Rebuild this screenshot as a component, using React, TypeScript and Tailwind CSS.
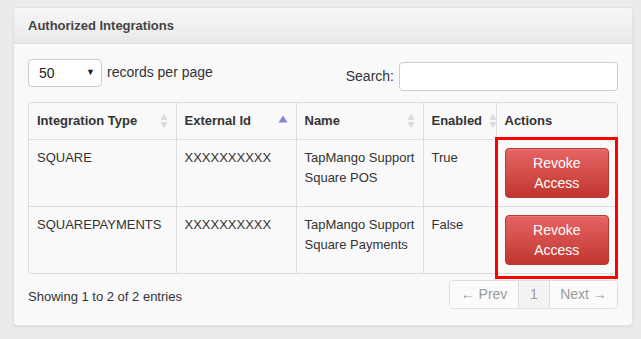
import React from "react";

interface Integration {
    type: string;
    externalId: string;
    name: string;
    enabled: string;
}

const rows: Integration[] = [
    { type: "SQUARE", externalId: "XXXXXXXXXX", name: "TapMango Support Square POS", enabled: "True" },
    { type: "SQUAREPAYMENTS", externalId: "XXXXXXXXXX", name: "TapMango Support Square Payments", enabled: "False" },
];

// icona di ordinamento: entrambe le frecce grigie oppure solo quella su attiva
const SortIcon = ({ active }: { active?: boolean }) => {
    if (active) {
        return (
            <svg width="10" height="8" viewBox="0 0 10 8" className="shrink-0">
                <path d="M5 0.5 L9.5 7.5 L0.5 7.5 Z" fill="#8383db" />
            </svg>
        );
    }
    return (
        <svg width="8" height="16" viewBox="0 0 8 16" className="shrink-0">
            <path d="M4 0.5 L7.5 7 L0.5 7 Z" fill="#dcdcdc" />
            <path d="M4 15.5 L7.5 9 L0.5 9 Z" fill="#dcdcdc" />
        </svg>
    );
};

const columns = [
    { label: "Integration Type", width: "w-[147px]", sort: "both" },
    { label: "External Id", width: "w-[120px]", sort: "up" },
    { label: "Name", width: "w-[127px]", sort: "both" },
    { label: "Enabled", width: "w-[73px]", sort: "both" },
    { label: "Actions", width: "w-[121px]", sort: "none" },
];

export default function App() {
    return (
        <div className="min-h-[339px] w-full bg-[#ebebeb] pl-[13px] pt-[7px] font-['Liberation_Sans',Arial,sans-serif] text-[#333]">
            <div className="w-[620px] h-[319px] rounded-[4px] border border-[#e2e2e2] bg-[#f9f9f9] shadow-[0_1px_2px_rgba(0,0,0,0.08)] overflow-hidden">
                {/* intestazione pannello */}
                <div className="h-[36px] flex items-center px-[14px] border-b border-[#dcdcdc] bg-linear-to-b from-[#f7f7f7] to-[#e9e9e9]">
                    <h3 className="text-[13px] font-bold text-[#444] leading-[20px]">Authorized Integrations</h3>
                </div>

                <div className="px-[14px] pt-[15px]">
                    <div className="flex justify-between items-start">
                        <div className="flex items-center">
                            <div className="w-[74px] h-[28px] rounded-[4px] border border-[#ccc] bg-white flex items-center justify-between pl-[10px] pr-[6px] text-[14px] text-[#222]">
                                <span>50</span>
                                <span className="text-[9px] text-[#222]">▼</span>
                            </div>
                            <span className="ml-[5px] text-[14px] mb-[2px]">records per page</span>
                        </div>
                        <div className="flex items-center mt-[3px]">
                            <span className="text-[14px] mr-[5px]">Search:</span>
                            <div className="w-[219px] h-[29px] rounded-[4px] border border-[#ccc] bg-white" />
                        </div>
                    </div>

                    <div className="relative mt-[11px]">
                        <div className="rounded-[4px] border border-[#ddd] overflow-hidden">
                            <table className="w-full table-fixed border-collapse text-[13px]">
                                <thead>
                                    <tr>
                                        {columns.map((c, i) => (
                                            <th key={c.label} className={`${c.width} h-[36px] px-[8px] text-left font-bold leading-[20px] ${i > 0 ? "border-l border-[#ddd]" : ""}`}>
                                                <div className="flex items-center justify-between">
                                                    <span className="whitespace-nowrap">{c.label}</span>
                                                    {c.sort === "both" && <span className={i === 3 ? "-mr-[9px] mt-[1px]" : "mt-[1px]"}><SortIcon /></span>}
                                                    {c.sort === "up" && <span className="mb-[3px]"><SortIcon active /></span>}
                                                </div>
                                            </th>
                                        ))}
                                    </tr>
                                </thead>
                                <tbody>
                                    {rows.map((r) => (
                                        <tr key={r.type} className="border-t border-[#ddd] align-top">
                                            <td className="px-[8px] pt-[8px] leading-[20px]">{r.type}</td>
                                            <td className="px-[8px] pt-[8px] leading-[20px] border-l border-[#ddd]">{r.externalId}</td>
                                            <td className="px-[8px] pt-[8px] leading-[20px] border-l border-[#ddd]">{r.name}</td>
                                            <td className="px-[8px] pt-[8px] leading-[20px] border-l border-[#ddd]">{r.enabled}</td>
                                            <td className="px-[8px] py-[8px] border-l border-[#ddd]">
                                                <button className="w-full h-[50px] rounded-[4px] border border-[#b83a37] bg-linear-to-b from-[#e66463] to-[#c0352f] text-white text-[14px] leading-[20px] shadow-[inset_0_1px_0_rgba(255,255,255,0.15)]">
                                                    Revoke<br />Access
                                                </button>
                                            </td>
                                        </tr>
                                    ))}
                                </tbody>
                            </table>
                        </div>
                        {/* riquadro rosso di evidenziazione */}
                        <div className="absolute left-[467px] top-[35px] w-[123px] h-[142px] border-[3px] border-[#ff0000]" />
                    </div>

                    <div className="flex justify-between items-start mt-[6px]">
                        <span className="pt-[7px] text-[13px] leading-[20px]">Showing 1 to 2 of 2 entries</span>
                        <div className="flex h-[29px] rounded-[4px] border border-[#ddd] overflow-hidden text-[14px] text-[#9a9a9a]">
                            <div className="w-[68px] flex items-center justify-center bg-[#fbfbfb]">← Prev</div>
                            <div className="w-[32px] flex items-center justify-center bg-[#f3f3f3] border-x border-[#ddd]">1</div>
                            <div className="w-[67px] flex items-center justify-center bg-[#fbfbfb]">Next →</div>
                        </div>
                    </div>
                </div>
            </div>
        </div>
    );
}
